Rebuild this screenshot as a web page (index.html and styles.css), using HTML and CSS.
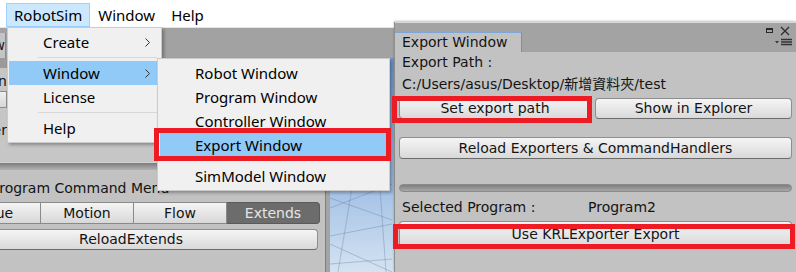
FILE: index.html
```html
<!DOCTYPE html>
<html lang="en">
<head>
  <meta charset="UTF-8">
  <title>RobotSim - Export Window</title>
  <link rel="stylesheet" href="styles.css">
</head>
<body>
  <div class="menubar">
    <span class="menubar-item active">RobotSim</span>
    <span class="menubar-item">Window</span>
    <span class="menubar-item">Help</span>
  </div>

  <div class="editor">
    <div class="dock-header">
      <div class="dock-tab"><span class="tail">Robot Window</span></div>
    </div>
    <div class="dock-body">
      <div class="left-panel">
        <div class="upper-pane">
          <div class="pane-band"></div>
          <div class="pane-row"><span class="tail">Position</span></div>
          <div class="pane-btn"></div>
          <div class="pane-row low"><span class="tail">Controller</span></div>
        </div>
        <div class="splitter"></div>
        <div class="command-pane">
          <div class="pane-label">Program Command Menu</div>
          <div class="seg-bar">
            <div class="seg">Value</div>
            <div class="seg">Motion</div>
            <div class="seg">Flow</div>
            <div class="seg selected">Extends</div>
          </div>
          <div class="ui-btn reload-extends">ReloadExtends</div>
        </div>
      </div>
      <div class="pane-divider"></div>
      <div class="scene-view">
        <svg width="62" height="214" viewBox="0 0 62 214">
          <g stroke="#5f7898" stroke-opacity="0.35" stroke-width="1" fill="none">
            <line x1="0" y1="150" x2="62" y2="126"/>
            <line x1="0" y1="178" x2="62" y2="166"/>
            <line x1="0" y1="206" x2="62" y2="201"/>
            <line x1="0" y1="140" x2="62" y2="162"/>
            <line x1="0" y1="186" x2="62" y2="214"/>
            <line x1="22" y1="130" x2="8" y2="214"/>
            <line x1="50" y1="130" x2="56" y2="214"/>
          </g>
        </svg>
      </div>
    </div>
  </div>

  <div class="export-window">
    <div class="export-header">
      <div class="export-tab">Export Window</div>
      <svg class="win-icons" width="28" height="22" viewBox="0 0 28 22">
        <rect x="1.5" y="2.5" width="6" height="4" fill="none" stroke="#2a2a2a"/>
        <rect x="1" y="2" width="7" height="2" fill="#2a2a2a"/>
        <path d="M16 1 L24 9 M24 1 L16 9" stroke="#2a2a2a" stroke-width="1.2"/>
        <polygon points="10,15 14,15 12,17.5" fill="#333"/>
        <path d="M16 13.5 H27 M16 16 H27 M16 18.5 H27" stroke="#333" stroke-width="1.4"/>
      </svg>
    </div>
    <div class="export-body">
      <div class="field-label">Export Path :</div>
      <div class="field-label">C:/Users/asus/Desktop/新增資料夾/test</div>
      <div class="btn-row">
        <div class="ui-btn">Set export path</div>
        <div class="ui-btn">Show in Explorer</div>
      </div>
      <div class="ui-btn reload">Reload Exporters &amp; CommandHandlers</div>
      <div class="track"></div>
      <div class="program-row">
        <span>Selected Program :</span>
        <span>Program2</span>
      </div>
      <div class="ui-btn export-btn">Use KRLExporter Export</div>
    </div>
  </div>

  <div class="menu menu-main">
    <div class="menu-item">Create
      <svg width="5" height="9" viewBox="0 0 5 9"><polyline points="0.5,0.5 4.5,4.5 0.5,8.5" fill="none" stroke="#333"/></svg>
    </div>
    <div class="menu-sep"></div>
    <div class="menu-item hover">Window
      <svg width="5" height="9" viewBox="0 0 5 9"><polyline points="0.5,0.5 4.5,4.5 0.5,8.5" fill="none" stroke="#333"/></svg>
    </div>
    <div class="menu-item">License</div>
    <div class="menu-sep"></div>
    <div class="menu-item">Help</div>
  </div>

  <div class="menu menu-sub">
    <div class="menu-item">Robot Window</div>
    <div class="menu-item">Program Window</div>
    <div class="menu-item">Controller Window</div>
    <div class="menu-item hover">Export Window</div>
    <div class="menu-sep"></div>
    <div class="menu-item">SimModel Window</div>
  </div>

  <!-- red annotation boxes -->
  <div class="mark mark-menu"></div>
  <div class="mark mark-path"></div>
  <div class="mark mark-export"></div>
</body>
</html>
```

FILE: styles.css
```css
* { box-sizing: border-box; }
body { margin: 0; width: 796px; height: 272px; overflow: hidden; position: relative; background: #c2c2c2; font-family: "DejaVu Sans", sans-serif; font-size: 14px; color: #141414; }

.menubar { height: 27px; background: #fff; display: flex; align-items: flex-end; padding-left: 6px; font-family: "Noto Sans", sans-serif; font-size: 15px; color: #000; }
.menubar-item { height: 24px; line-height: 22px; padding: 0 7px; border: 1px solid transparent; }
.menubar-item.active { background: #cce8ff; border-color: #99d1ff; }

.editor { height: 245px; display: flex; flex-direction: column; }
.dock-header { height: 31px; background: #a2a2a2; border-top: 1px solid #e4e4e4; padding-top: 5px; }
.dock-tab { width: 6px; height: 25px; background: #c4c4c4; border-right: 1px solid #8c8c8c; line-height: 24px; }
.tail { display: block; width: 100%; overflow: hidden; white-space: nowrap; direction: rtl; }
.dock-body { flex: 1; display: flex; }

.left-panel { width: 325px; background: #c2c2c2; display: flex; flex-direction: column; overflow: hidden; }
.upper-pane { height: 105px; display: flex; flex-direction: column; background: #c6c6c6; border-bottom: 1px solid #d4d4d4; }
.pane-band { height: 10px; background: #9a9a9a; }
.pane-row { width: 7px; height: 20px; line-height: 22px; margin-top: 2px; }
.pane-row.low { margin-top: 11px; }
.pane-btn { width: 7px; height: 17px; margin-top: 1px; background: linear-gradient(#efefef, #d6d6d6); border: 1px solid #8c8c8c; border-left: none; }
.splitter { height: 7px; background: linear-gradient(#7c7c7c, #b2b2b2); }
.command-pane { flex: 1; padding-top: 7px; }
.pane-label { line-height: 22px; margin-left: -9px; white-space: nowrap; }
.seg-bar { display: flex; width: 372px; height: 22px; margin-left: -52px; margin-top: 3px; }
.seg { flex: 1; text-align: center; line-height: 20px; background: linear-gradient(#f4f4f4, #d8d8d8); border: 1px solid #8a8a8a; border-left: none; }
.seg.selected { background: #6c6c6c; color: #e6e6e6; border-color: #5a5a5a; border-radius: 0 4px 4px 0; }
.reload-extends { width: 374px; height: 22px; margin-left: -56px; margin-top: 5px; line-height: 20px; }

.pane-divider { width: 5px; background: #a4a4a4; border-left: 1px solid #7e7e7e; }
.scene-view { flex: 1; background: linear-gradient(#6f97cf, #9cbce3 55%, #d4e3f2); overflow: hidden; }
.scene-view svg { display: block; }

.export-window { position: absolute; left: 394px; top: 22px; right: 0; bottom: 0; background: #c2c2c2; border-left: 1px solid #8e8e8e; box-shadow: 0 -1px 2px rgba(0,0,0,0.25); }
.export-header { height: 30px; background: #a3a3a3; display: flex; justify-content: space-between; align-items: flex-start; border-top: 1px solid #d8d8d8; }
.export-tab { margin-top: 9px; width: 127px; height: 20px; background: #c2c2c2; border: 1px solid #8c8c8c; border-top-color: #7ea6d6; border-bottom: none; border-left: none; line-height: 19px; padding-left: 7px; }
.win-icons { margin: 3px 3px 0 0; }
.export-body { padding: 0 4px 0 4px; }
.field-label { line-height: 22px; padding-left: 3px; font-family: "DejaVu Sans", "Noto Sans CJK TC", sans-serif; }
.field-label:first-child { margin-top: -1px; }
.btn-row { display: grid; grid-template-columns: 192px 1fr; gap: 4px; margin-top: 3px; }
.ui-btn { height: 21px; line-height: 19px; text-align: center; background: linear-gradient(#f5f5f5, #d9d9d9); border: 1px solid #8e8e8e; border-bottom-color: #6c6c6c; border-radius: 4px; white-space: nowrap; }
.reload { height: 22px; margin-top: 18px; line-height: 20px; }
.track { height: 8px; margin-top: 25px; border-radius: 4px; background: linear-gradient(#7e7e7e, #a8a8a8); border: 1px solid #8a8a8a; }
.program-row { display: grid; grid-template-columns: 186px 1fr; line-height: 22px; margin-top: 4px; padding-left: 3px; }
.export-btn { height: 26px; margin-top: 3px; line-height: 24px; }

.menu { position: absolute; background: #f0f0f0; border: 1px solid #cccccc; box-shadow: 2px 2px 3px rgba(0,0,0,0.3); padding: 2px 4px 2px 1px; font-family: "Noto Sans", sans-serif; font-size: 15px; color: #000; }
.menu-main { left: 7px; top: 27px; width: 155px; }
.menu-sub { left: 157px; top: 58px; width: 233px; padding: 2px; }
.menu-item { height: 24px; line-height: 24px; padding: 0 7px 0 34px; display: flex; justify-content: space-between; align-items: center; }
.menu-sub .menu-item { padding-left: 35px; }
.menu-item.hover { background: #91c9f7; }
.menu-sep { height: 7px; padding: 3px 0 0 29px; }
.menu-sep::before { content: ""; display: block; height: 1px; background: #d7d7d7; }

.mark { position: absolute; border: 5px solid #ed1c24; }
.mark-menu { left: 154px; top: 128px; width: 237px; height: 33px; }
.mark-path { left: 392px; top: 96px; width: 200px; height: 27px; }
.mark-export { left: 393px; top: 224px; width: 402px; height: 25px; }
```
